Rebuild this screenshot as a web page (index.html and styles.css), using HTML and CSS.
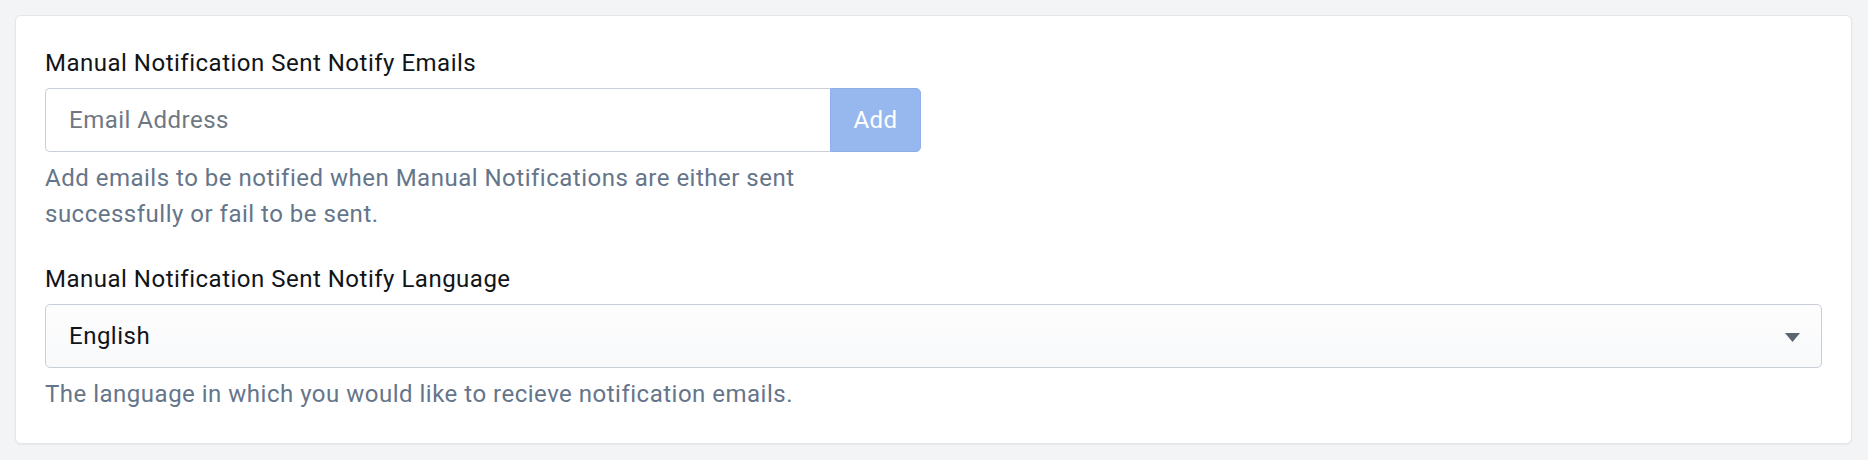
FILE: index.html
```html
<!DOCTYPE html>
<html lang="en">
<head>
<meta charset="utf-8">
<title>Notification settings</title>
<link rel="stylesheet" href="styles.css">
</head>
<body>
<div class="page">
  <div class="card">
    <div class="field field-half">
      <label class="label" for="email">Manual Notification Sent Notify Emails</label>
      <div class="input-group">
        <input id="email" class="input" type="text" placeholder="Email Address">
        <button class="btn-add" type="button" disabled>Add</button>
      </div>
      <p class="help">Add emails to be notified when Manual Notifications are either sent successfully or fail to be sent.</p>
    </div>
    <div class="field">
      <label class="label" for="lang">Manual Notification Sent Notify Language</label>
      <div class="select">
        <span class="select-value">English</span>
        <svg class="caret" width="15" height="9" viewBox="0 0 15 9"><path d="M0 0H15L7.5 9Z" fill="#5b6571"/></svg>
      </div>
      <p class="help">The language in which you would like to recieve notification emails.</p>
    </div>
  </div>
</div>
</body>
</html>
```

FILE: styles.css
```css
* { box-sizing: border-box; }
html, body { margin: 0; padding: 0; }
body {
  background: #f3f4f6;
  font-family: Roboto, "Noto Sans", "Liberation Sans", sans-serif;
  font-size: 24px;
  line-height: 36px;
  letter-spacing: 0.5px;
  color: #111418;
}
.page {
  padding: 15px 16px 16px 15px;
}
.card {
  background: #ffffff;
  border: 1px solid #e3e6ea;
  border-radius: 6px;
  box-shadow: 0 1px 2px rgba(0, 0, 0, 0.06);
  padding: 29px 29px 31px 29px;
  display: flex;
  flex-direction: column;
  gap: 29px;
}
.field { display: flex; flex-direction: column; }
.field-half { width: 876px; }
.label {
  display: block;
  margin-bottom: 7px;
  color: #111418;
}
.input-group {
  display: flex;
  height: 64px;
}
.input {
  flex: 1;
  min-width: 0;
  height: 64px;
  border: 1px solid #c9cfd7;
  border-right: none;
  border-radius: 5px 0 0 5px;
  padding: 0 23px;
  font: inherit;
  letter-spacing: inherit;
  color: #111418;
  background: #fff;
  outline: none;
}
.input::placeholder { color: #6f7882; }
.btn-add {
  width: 91px;
  height: 64px;
  border: 1px solid #8db0ec;
  border-radius: 0 5px 5px 0;
  background: #97b8ee;
  color: #ffffff;
  font: inherit;
  letter-spacing: inherit;
  padding: 0;
}
.help {
  margin: 8px 0 0 0;
  color: #65758a;
}
.select {
  height: 64px;
  border: 1px solid #c9cfd7;
  border-radius: 5px;
  background: linear-gradient(#fdfdfe, #f8f9fa);
  display: flex;
  align-items: center;
  justify-content: space-between;
  padding: 0 21px 0 23px;
}
.select-value { color: #111418; }
.caret { display: block; margin-top: 2px; }
```
